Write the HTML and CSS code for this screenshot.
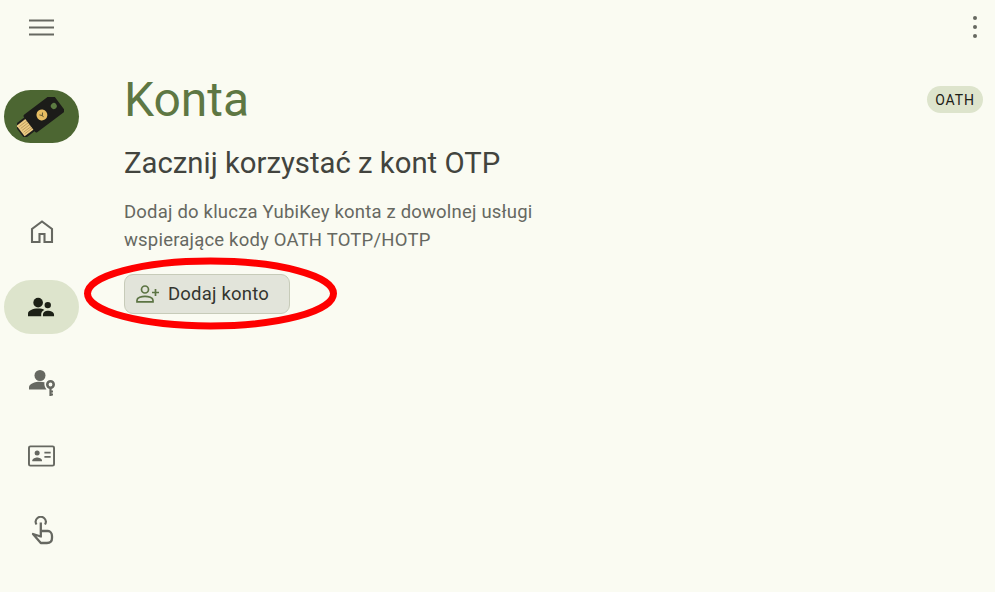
FILE: index.html
```html
<!DOCTYPE html>
<html lang="pl">
<head>
<meta charset="utf-8">
<title>Konta</title>
<link rel="stylesheet" href="styles.css">
</head>
<body>
<div class="app">
  <aside class="rail">
    <button class="menu-btn" aria-label="Menu">
      <svg class="ic-menu" viewBox="0 0 25 17"><path d="M0 1.500h25M0 8.500h25M0 15.500h25" fill="none" stroke="#666861" stroke-width="2.200"/></svg>
    </button>
    <div class="pill pill-key">
      <svg class="ic-key" viewBox="0 0 60 50">
        <g transform="rotate(-37 30 25)">
          <rect x="-3" y="13" width="18" height="22" rx="1" fill="#20201c"/>
          <rect x="-1" y="15.500" width="15" height="17" fill="#ecca84"/>
          <path d="M1 18.500h13M1 21.500h13M1 24.500h13M1 27.500h13M1 30h13" stroke="#a88a4c" stroke-width=".8"/>
          <rect x="13" y="10" width="47" height="28" rx="2.500" fill="#1c1c19"/>
          <circle cx="33" cy="24" r="7" fill="#e6bd62"/>
          <path d="M30.500 22l2.500 3 2.500-3M33 25v2.500" stroke="#4d4a2c" stroke-width="1" fill="none"/>
          <circle cx="52" cy="24" r="3.800" fill="#5c7a42"/>
        </g>
      </svg>
    </div>
    <nav class="nav">
      <div class="pill">
        <svg class="ic ic-home" viewBox="0 0 24 24"><path d="M2 22.500V9.500L12 2l10 7.500v13h-7.500v-8h-5v8z" fill="none" stroke="#666861" stroke-width="2.100"/></svg>
      </div>
      <div class="pill pill-active">
        <svg class="ic ic-wide" viewBox="0 0 28 20"><circle cx="10.500" cy="5.500" r="5" fill="#1c2016"/><circle cx="20.500" cy="8" r="3.300" fill="#1c2016"/><path d="M0 19.500v-2.500c0-3.500 5-5.500 10.500-5.500 2.800 0 5 .5 6.500 1.500-2.200 1-3.300 2.500-3.300 4.500v2z" fill="#1c2016"/><path d="M15.500 19.500v-1.500c0-2.500 2.500-4 5.200-4s6.300 1.500 6.300 4v1.500z" fill="#1c2016"/></svg>
      </div>
      <div class="pill">
        <svg class="ic ic-pass" viewBox="0 0 28 28"><circle cx="11" cy="6.500" r="5.500" fill="#666861"/><path d="M0 20.500v-2c0-3.800 6-5.700 11-5.700 1.500 0 3 .2 4.500.5-.5 2.500.2 5 2 7.200z" fill="#666861"/><circle cx="21.500" cy="15.500" r="3.200" fill="none" stroke="#666861" stroke-width="2.600"/><path d="M21.500 18v9M21.500 22.500h2.500M21.500 25.500h2.500" fill="none" stroke="#666861" stroke-width="2.200"/></svg>
      </div>
      <div class="pill">
        <svg class="ic ic-wide" viewBox="0 0 28 22"><rect x="1" y="1" width="26" height="20" rx="1.500" fill="none" stroke="#666861" stroke-width="2"/><circle cx="9.500" cy="8" r="2.600" fill="#666861"/><path d="M4.500 16.500v-1c0-2 3.200-3 5-3s5 1 5 3v1z" fill="#666861"/><path d="M17 7.500h6.500M17 12h6.500" stroke="#666861" stroke-width="1.800"/></svg>
      </div>
      <div class="pill">
        <svg class="ic ic-tall" viewBox="0 0 24 29"><path d="M6.500 8.500a5 5 0 1 1 8.500 0" fill="none" stroke="#666861" stroke-width="2.100"/><path d="M10.800 21.500V6.500M10.800 20.500L3 18l7.800 9h6.200c3 0 5-2 5-5v-2c0-3-2-5-4-5h-7" fill="none" stroke="#666861" stroke-width="2.300" stroke-linejoin="round"/></svg>
      </div>
    </nav>
  </aside>
  <main class="content">
    <header class="head">
      <h1 class="title">Konta</h1>
      <div class="tools">
        <button class="dots" aria-label="Więcej"><span></span><span></span><span></span></button>
        <span class="chip">OATH</span>
      </div>
    </header>
    <h2 class="subtitle">Zacznij korzystać z kont OTP</h2>
    <p class="desc">Dodaj do klucza YubiKey konta z dowolnej usługi<br>wspierające kody OATH TOTP/HOTP</p>
    <div class="actions">
      <button class="btn">
        <svg class="ic-add" viewBox="0 0 24 18"><circle cx="9" cy="4.500" r="3.500" fill="none" stroke="#5c7443" stroke-width="1.700"/><path d="M1 16.800v-1.600c0-2.600 4.500-3.900 8-3.900s8 1.300 8 3.900v1.600z" fill="none" stroke="#5c7443" stroke-width="1.700"/><path d="M19.500 4v7M16 7.500h7" stroke="#5c7443" stroke-width="1.700"/></svg>
        Dodaj konto
      </button>
    </div>
  </main>
</div>
<svg class="annotation" viewBox="0 0 260 78" aria-hidden="true"><ellipse cx="130.500" cy="39.500" rx="123" ry="32.500" fill="none" stroke="#fe0000" stroke-width="7"/></svg>
</body>
</html>
```
FILE: styles.css
```css
* { box-sizing: border-box; }
html, body { margin: 0; height: 100%; }
body {
  background: #fafbf2;
  font-family: Roboto, "Noto Sans", sans-serif;
  color: #42443e;
  overflow: hidden;
  position: relative;
}
button { font: inherit; border: 0; background: none; padding: 0; }
.app { display: flex; height: 592px; }

.rail {
  width: 83px;
  flex: none;
  padding: 0 4px;
  display: flex;
  flex-direction: column;
}
.menu-btn {
  height: 54px;
  display: flex;
  align-items: center;
  justify-content: center;
  width: 75px;
}
.ic-menu { width: 25px; height: 17px; display: block; }
.pill {
  width: 75px;
  height: 54px;
  border-radius: 27px;
  display: flex;
  align-items: center;
  justify-content: center;
}
.pill-key { background: #4c6632; margin-top: 36px; height: 53px; }
.ic-key { width: 47px; height: 40px; margin: 0 0 0 -3px; }
.nav {
  margin-top: 62px;
  display: flex;
  flex-direction: column;
  gap: 20.750px;
}
.pill-active { background: #dde4cc; }
.ic { width: 24px; height: 25px; }
.ic-home { margin-bottom: 2px; }
.ic-wide { width: 27px; height: 22px; }
.ic-pass { width: 28px; height: 28px; margin: 2px 0 0 2px; }
.ic-tall { width: 24px; height: 29px; margin-bottom: 2px; }

.content { flex: 1; padding: 0 12px 0 41px; min-width: 0; }
.head { display: flex; justify-content: space-between; align-items: flex-start; }
.title {
  margin: 72px 0 0;
  font-size: 48px;
  line-height: 56px;
  font-weight: 400;
  color: #5e7743;
}
.tools { display: flex; flex-direction: column; align-items: flex-end; }
.dots {
  width: 4px;
  height: 22px;
  margin: 16px 6px 0 0;
  display: flex;
  flex-direction: column;
  justify-content: space-between;
}
.dots span { width: 4px; height: 4px; border-radius: 50%; background: #666861; }
.chip {
  margin-top: 48px;
  height: 27px;
  width: 56px;
  border-radius: 14px;
  background: #dde4cc;
  color: #1c2016;
  font-size: 14px;
  letter-spacing: .9px;
  display: flex;
  align-items: center;
  justify-content: center;
}
.subtitle {
  margin: 17px 0 0;
  font-size: 29.300px;
  line-height: 36px;
  font-weight: 400;
  color: #42443e;
}
.desc {
  margin: 17px 0 0;
  font-size: 18.500px;
  letter-spacing: .2px;
  line-height: 28px;
  color: #666861;
}
.actions { margin-top: 20px; display: flex; }
.btn {
  width: 166px;
  height: 40px;
  border: 1.500px solid #c7cbb9;
  border-radius: 9px;
  background: #e2e4da;
  color: #33352f;
  font-size: 18.500px;
  letter-spacing: .2px;
  display: flex;
  align-items: center;
  gap: 8px;
  padding: 0 0 1px 11px;
}
.ic-add { width: 24px; height: 18px; }
.annotation {
  position: absolute;
  left: 80px;
  top: 254px;
  width: 260px;
  height: 78px;
}
```
